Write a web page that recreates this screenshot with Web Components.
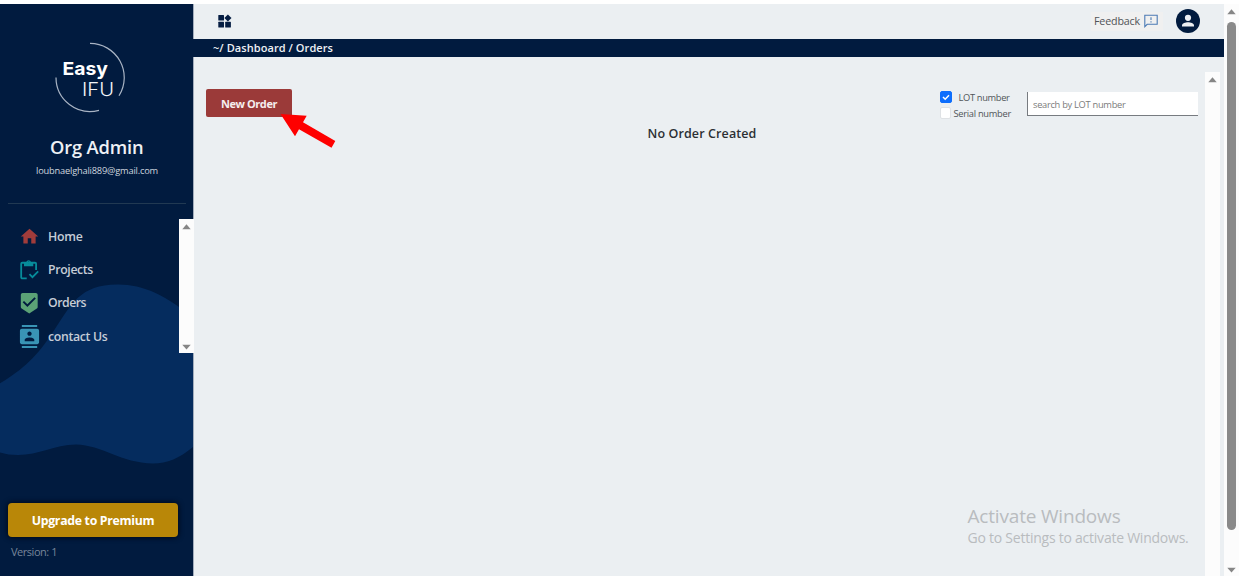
<!DOCTYPE html>
<html lang="en">
<head>
<meta charset="utf-8">
<title>Easy IFU - Orders</title>
<style>
html,body{margin:0;height:100%;background:#fff;overflow:hidden;font-family:"Open Sans","Noto Sans",sans-serif}
</style>
</head>
<body>
<ifu-app></ifu-app>
<script>
const FONT = '"Open Sans","Noto Sans",sans-serif';
const pen = document.createElement('canvas').getContext('2d');
const spacing = (text, size, weight, width) => {
  pen.font = `${weight} ${size}px ${FONT}`;
  return (width - pen.measureText(text).width) / text.length;
};
const define = (name, html, init) => customElements.define(name, class extends HTMLElement {
  connectedCallback() {
    if (this.shadowRoot) return;
    const t = document.createElement('template');
    t.innerHTML = html;
    this.attachShadow({mode: 'open'}).append(t.content.cloneNode(true));
    if (init) init(this, this.shadowRoot);
  }
});

/* One line of text, tracked out to a fixed measure */
define('ui-text', `<style>:host{display:block;white-space:nowrap}</style><slot></slot>`, el => {
  const size = +el.getAttribute('size'), weight = el.getAttribute('weight') || 400;
  const text = el.textContent.trim();
  el.style.fontSize = size + 'px';
  el.style.fontWeight = weight;
  el.style.lineHeight = (el.getAttribute('line') || 16) + 'px';
  el.style.letterSpacing = spacing(text, size, weight, +el.getAttribute('width')) + 'px';
});

define('scroll-bar', `<style>
:host{display:flex;flex-direction:column;align-items:center;box-sizing:border-box;width:15px;background:#fcfcfc;padding:5px 0 3px}
svg{display:block;width:9px;height:6px;fill:#868686;flex:none}
.thumb{width:9px;border-radius:5px;background:#8a8a8a}
.space{flex:1}
</style><svg viewBox="0 0 9 6"><path d="M4.5 .3 8.7 5.3H.3z"/></svg><div class="thumb"></div><div class="space"></div><svg class="down" viewBox="0 0 9 6"><path d="M.3 .7h8.4L4.5 5.5z"/></svg>`, (el, r) => {
  const h = el.getAttribute('thumb');
  if (h) { r.querySelector('.thumb').style.cssText = `height:${h}px;margin-top:7px`; }
  if (el.hasAttribute('open-end')) r.querySelector('.down').remove();
});

define('brand-logo', `<style>:host{display:block}svg{display:block}</style>
<svg width="72" height="72" viewBox="54 42 72 72" fill="none">
<path d="M90 43.4A34.2 34.2 0 0 1 119 95.8M56 77.5A34.2 34.2 0 0 0 99 110.4" stroke="#a9b4c4" stroke-width="1.2"/>
<text x="62.5" y="75.3" font-family="Inter" font-weight="700" font-size="18" fill="#fff" textLength="45.5" lengthAdjust="spacingAndGlyphs">Easy</text>
<text x="82" y="95.8" font-family="Inter" font-weight="300" font-size="18" fill="#f1f4f8" textLength="32" lengthAdjust="spacingAndGlyphs">IFU</text>
</svg>`);

define('nav-item', `<style>
:host{display:flex;align-items:center;height:33.3px;color:#c6cdd7}
.icon{width:24px;height:24px;margin:0 7px 0 17px;display:flex;align-items:center;justify-content:center}
</style><div class="icon"><slot name="icon"></slot></div><slot></slot>`);

define('side-bar', `<style>
:host{position:relative;display:flex;flex-direction:column;width:193px;height:572px;background:#011b3f;border-right:1px solid #a3adbc;color:#eef1f5}
.wave{position:absolute;left:0;top:0}
.head{position:relative;display:flex;flex-direction:column;height:199px;align-items:flex-start;box-sizing:border-box;padding-top:38px}
brand-logo{margin-left:54px}
.name{margin:21px 0 0 50px}
.mail{margin:5px 0 0 36px;color:#ced5de}
.nav{position:relative;display:flex;height:133.5px;margin-top:15px;margin-right:-1px}
.items{flex:1;padding-top:1px}
hr{position:relative;border:0;width:178px;height:1px;margin:0 0 0 8px;background:#213952;flex:none}
button{position:relative;display:flex;align-items:center;justify-content:center;margin:150.5px 0 0 8px;width:170px;height:34px;padding:1px 0 0;box-sizing:border-box;border:0;border-radius:4px;background:#b98708;color:#fff;font-family:inherit;box-shadow:0 0 5px 1px #000a1c;flex:none}
.ver{margin:7px 0 0 11px;color:#78869a}
</style>
<svg class="wave" width="193" height="572" viewBox="0 4 193 572"><path fill="#052c5e" d="M0 383.3C24 369 37 356 53 332C72 303 80 285 117 284.5C142 284 166 295 193 318V447C180 458 167 463.5 153 463.5C121 463 102 445 76 444.5C54 445 39 455 18 455Q8 455 0 452.5Z"/></svg>
<div class="head"><brand-logo></brand-logo>
<ui-text class="name" size="18.3" weight="600" line="24" width="93.5">Org Admin</ui-text>
<ui-text class="mail" size="9.3" line="14" width="122">loubnaelghali889@gmail.com</ui-text></div>
<hr>
<div class="nav"><div class="items">
<nav-item><svg slot="icon" width="21" height="21" viewBox="0 0 24 24" fill="#a03c3b"><path d="M10 20v-6h4v6h5v-8h3L12 3 2 12h3v8z"/></svg><ui-text size="12.3" weight="600" width="34.5">Home</ui-text></nav-item>
<nav-item><svg slot="icon" width="20" height="20" viewBox="0 0 22 22" fill="none" stroke="#078c9b" stroke-width="2"><path d="M8.500 20.200H3.600a1.200 1.200 0 0 1-1.200-1.200V4.200A1.200 1.200 0 0 1 3.600 3h14a1.200 1.200 0 0 1 1.200 1.200V11M11.500 15.500l3.300 3.300 6.300-6.300"/><path fill="#078c9b" stroke="none" fill-rule="evenodd" d="M5.500 2.300h2.500a2.700 2.700 0 0 1 5.200 0h2.500V7H5.500zM10.600 1.600a1 1 0 1 0 0 2 1 1 0 0 0 0-2"/></svg><ui-text size="12.3" weight="600" width="45">Projects</ui-text></nav-item>
<nav-item><svg slot="icon" width="22.5" height="22.5" viewBox="0 0 24 24" fill="#5ba276"><path d="M19 1H5c-1.1 0-1.99.9-1.99 2L3 15.93c0 .69.35 1.3.88 1.66L12 23l8.11-5.41c.53-.36.88-.97.88-1.66L21 3c0-1.1-.9-2-2-2m-9 15-5-5 1.41-1.41L10 13.17l7.59-7.59L19 7z"/></svg><ui-text size="12.3" weight="600" width="38">Orders</ui-text></nav-item>
<nav-item><svg slot="icon" width="23" height="23" viewBox="0 0 24 24" fill="#3994b5"><path d="M20 0H4v2h16zM4 24h16v-2H4zM20 4H4c-1.1 0-2 .9-2 2v12c0 1.1.9 2 2 2h16c1.1 0 2-.9 2-2V6c0-1.1-.9-2-2-2m-8 2.75c1.24 0 2.25 1.01 2.25 2.25s-1.01 2.25-2.25 2.25S9.750 10.240 9.750 9 10.760 6.750 12 6.750M17 17H7v-1.500c0-1.670 3.330-2.500 5-2.500s5 .83 5 2.500z"/></svg><ui-text size="12.3" weight="600" width="59.5">contact Us</ui-text></nav-item>
</div><scroll-bar></scroll-bar></div>
<button><ui-text size="12.300" weight="700" width="122.500">Upgrade to Premium</ui-text></button>
<ui-text class="ver" size="11" width="46">Version: 1</ui-text>`);

define('top-bar', `<style>
:host{display:flex;height:35px;align-items:center;justify-content:space-between;padding:0 24px;box-sizing:border-box;padding-bottom:1px}
.right{display:flex;align-items:center;gap:13px}
.feedback{display:flex;align-items:center;gap:4px;height:19px;padding:0 5px 0 3px;background:#f0f0f0;color:#505357}
svg{display:block}
</style>
<svg width="14" height="14" viewBox="0 0 14 14" fill="#051d43"><rect x=".3" y="1" width="5.700" height="5.400" rx=".5"/><rect x=".3" y="7.700" width="5.700" height="5.700" rx=".5"/><rect x="7.200" y="7.700" width="5.700" height="5.700" rx=".5"/><path d="M9.900 .4 13.500 4 9.900 7.400 6.400 4z"/></svg>
<div class="right"><div class="feedback"><ui-text size="10.700" width="46">Feedback</ui-text>
<svg width="14" height="14" viewBox="0 0 14 14" fill="none" stroke="#4b7ab4" stroke-width="1.100"><path d="M.8 12.700V1.300h12.400v9H3.200z"/><path d="M7 3.200v2.900M7 7.200v1.300"/></svg></div>
<svg width="24" height="24" viewBox="0 0 24 24"><circle cx="12" cy="12" r="12" fill="#011b3f"/><circle cx="12" cy="8.800" r="3.100" fill="#eceff3"/><path d="M6 17.500v-1.200c0-2 3.500-3.100 6-3.100s6 1.100 6 3.100v1.200z" fill="#eceff3"/></svg></div>`);

define('crumb-bar', `<style>:host{display:flex;align-items:center;height:18px;margin-left:-1px;padding-left:20px;background:#011b3f;color:#eef1f5;position:relative}</style>
<ui-text size="11" weight="600" width="120">~/ Dashboard / Orders</ui-text>`);

define('check-option', `<style>
:host{display:flex;align-items:center;height:16px;color:#505559}
.box{display:flex;width:10px;height:10px;border:1px solid #dfe2e5;border-radius:2px;background:#fff}
:host([checked]) .box{background:#0d6efd;border-color:#0d6efd}
.label{margin-left:2px;padding-top:1px}
:host([checked]) .label{margin-left:6.500px}
svg{display:none}:host([checked]) svg{display:block}
</style><div class="box"><svg width="10" height="10" viewBox="0 0 10 10" fill="none" stroke="#fff" stroke-width="1.500"><path d="m2 5 2.200 2.200L8 3.300"/></svg></div><div class="label"><slot></slot></div>`);

define('search-field', `<style>
:host{display:block}
input{display:block;box-sizing:border-box;width:171px;height:24px;margin:0;padding:1px 0 0 5px;border:solid #777b80;border-width:0 0 1px 1px;border-radius:0;background:#fff;font:9.300px ${FONT};outline:0}
input::placeholder{color:#7b7b7b;opacity:1}
</style><input placeholder="search by LOT number">`, (el, r) => {
  const i = r.querySelector('input');
  i.style.letterSpacing = spacing(i.placeholder, 9.3, 400, 92.5) + 'px';
});

define('order-panel', `<style>
:host{position:relative;display:flex;height:519px}
.body{flex:1;min-width:0}
.tools{display:flex;align-items:flex-start;height:67px;box-sizing:border-box;padding:32px 7px 0 12px}
button{display:flex;align-items:center;justify-content:center;width:86px;height:28px;padding:1px 0 0;box-sizing:border-box;border:0;border-radius:2px;background:#9b3a39;color:#f5eeee;font-family:inherit}
.filters{margin:0 16px 0 auto;width:71px}
.search{margin-top:3px}
.empty{margin-left:453.500px;padding-top:1px;color:#2c3034}
scroll-bar{margin:15px 4px 0 0}
.arrow{position:absolute;left:86px;top:55px}
.watermark{position:absolute;left:773.500px;top:446px;color:#b9bcbf}
</style>
<div class="body"><div class="tools"><button><ui-text size="11" weight="700" width="56">New Order</ui-text></button>
<div class="filters"><check-option checked><ui-text size="9.300" width="51">LOT number</ui-text></check-option><check-option><ui-text size="9.300" width="57.500">Serial number</ui-text></check-option></div>
<search-field class="search"></search-field></div>
<ui-text class="empty" size="12.500" weight="600" line="18" width="109">No Order Created</ui-text></div>
<scroll-bar open-end></scroll-bar>
<svg class="arrow" width="58" height="40" viewBox="280 112 58 40"><path fill="#fe0000" d="M280.500 114 306.700 115.700 303 122.300 335.300 141 331.500 147.700 299 129.300 295 136.300z"/></svg>
<div class="watermark"><ui-text size="19" line="26" width="153">Activate Windows</ui-text><ui-text size="14" line="18" width="221">Go to Settings to activate Windows.</ui-text></div>`);

define('ifu-app', `<style>
:host{display:grid;grid-template-columns:194px 1030px 15px;height:572px;padding-top:4px;width:1239px}
main{background:#ebeff2;min-width:0}
.outer{height:572px}
</style><side-bar></side-bar><main><top-bar></top-bar><crumb-bar></crumb-bar><order-panel></order-panel></main><scroll-bar class="outer" thumb="508"></scroll-bar>`);
</script>
</body>
</html>
